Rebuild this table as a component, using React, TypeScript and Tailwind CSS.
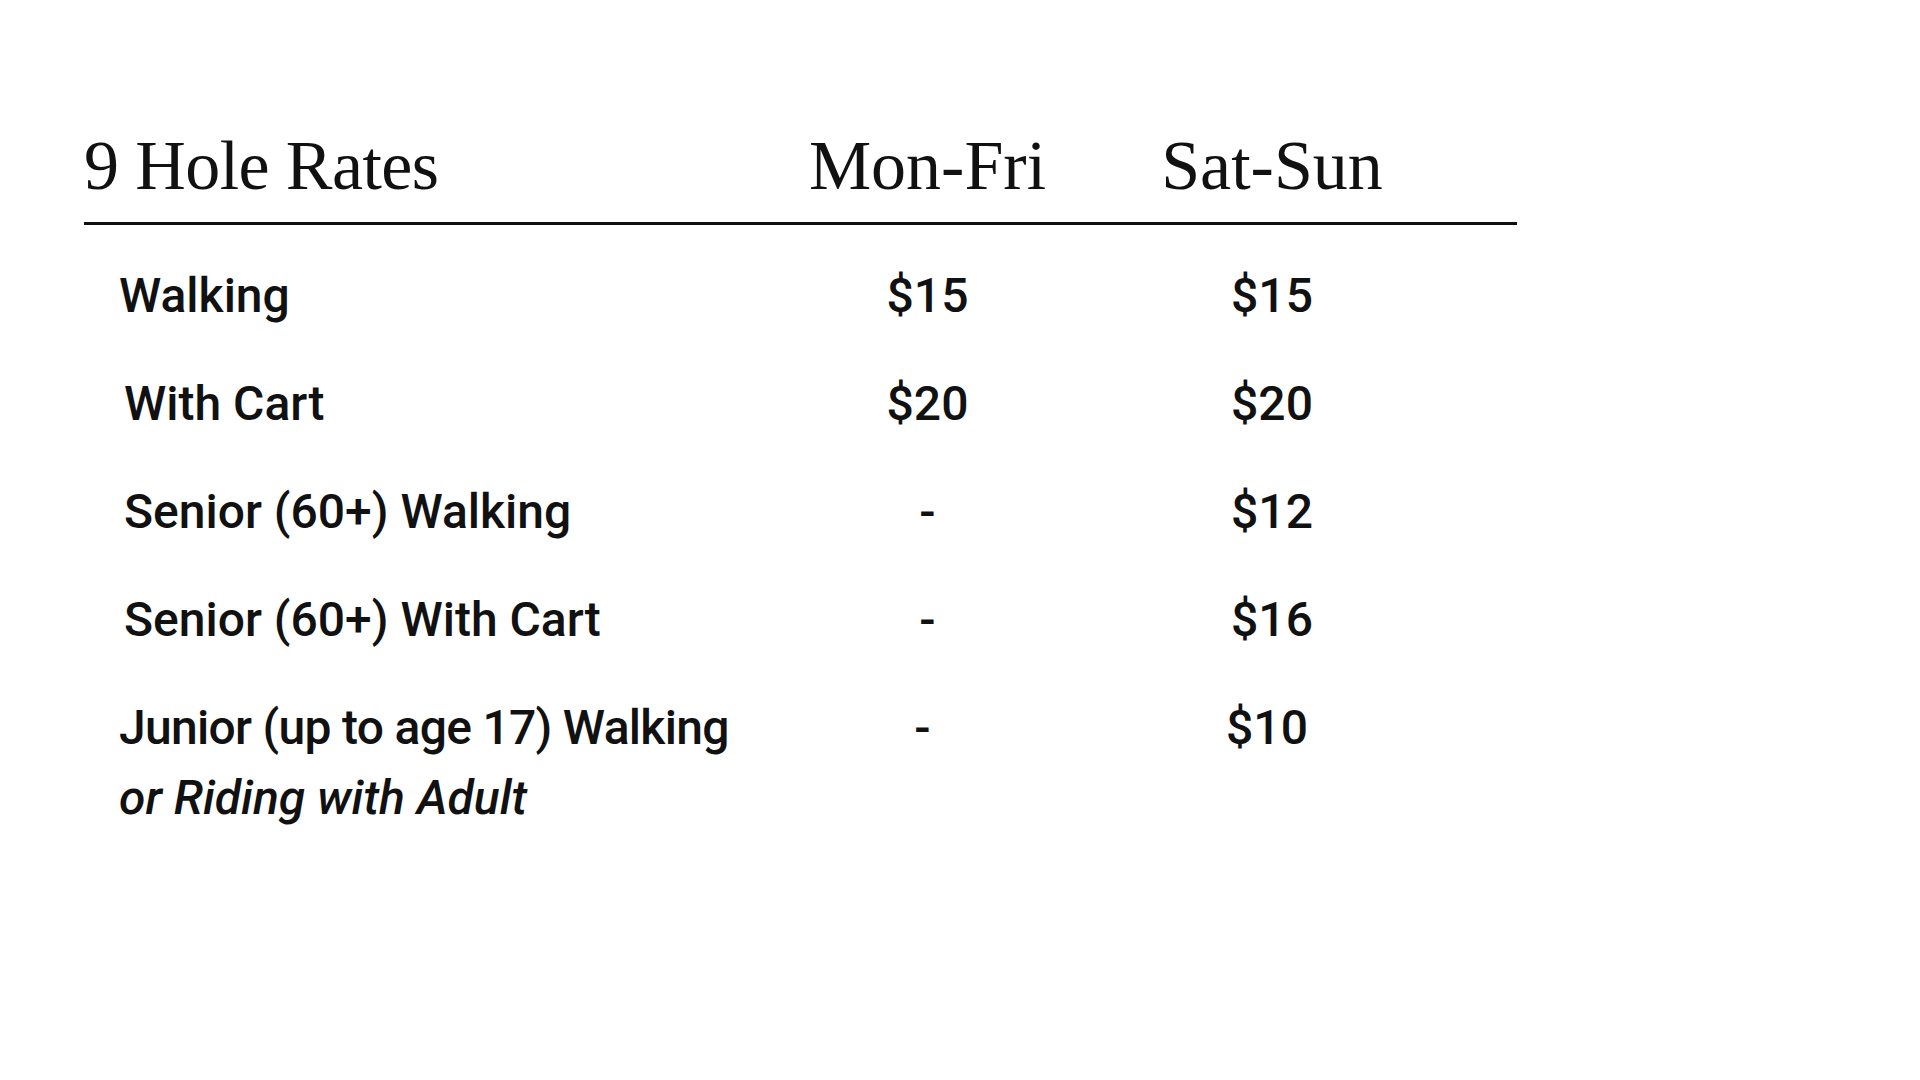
type Rate = {
  label: string;
  note?: string;
  indent: string;
  weekday: string;
  weekend: string;
  shift?: boolean;
};

const RATES: Rate[] = [
  { label: "Walking", indent: "pl-[35px]", weekday: "$15", weekend: "$15" },
  { label: "With Cart", indent: "pl-[40px]", weekday: "$20", weekend: "$20" },
  { label: "Senior (60+) Walking", indent: "pl-[40px]", weekday: "-", weekend: "$12" },
  { label: "Senior (60+) With Cart", indent: "pl-[40px]", weekday: "-", weekend: "$16" },
  {
    label: "Junior (up to age 17) Walking",
    note: "or Riding with Adult",
    indent: "pl-[35px]",
    weekday: "-",
    weekend: "$10",
    shift: true,
  },
];

export default function App() {
  return (
    <div className="w-[1920px] h-[1080px] bg-white text-[#111] overflow-hidden">
      <div className="pl-[84px] pt-[131px] w-[1517px]">
        {/* Header */}
        <div className="grid grid-cols-[723px_241px_448px] font-['Liberation_Serif','Times_New_Roman',serif] text-[70px] leading-[70px] pb-[21px]">
          <div className="tracking-[-0.6px]">9 Hole Rates</div>
          <div className="text-center">Mon-Fri</div>
          <div className="text-center">Sat-Sun</div>
        </div>
        <div className="h-[3px] bg-[#111]" />

        {/* Rows */}
        <div className="pt-[17px] font-['Roboto','Liberation_Sans',sans-serif] font-medium text-[48px] leading-[68px]">
          {RATES.map((r) => (
            <div key={r.label} className="grid grid-cols-[723px_241px_448px] py-[20px]">
              <div className={r.indent}>
                <div className={r.shift ? "tracking-[-0.7px]" : ""}>{r.label}</div>
                {r.note && <div className="italic pt-[2px]">{r.note}</div>}
              </div>
              <div className={r.shift ? "text-center pr-[10px]" : "text-center"}>{r.weekday}</div>
              <div className={r.shift ? "text-center pr-[10px]" : "text-center"}>{r.weekend}</div>
            </div>
          ))}
        </div>
      </div>
    </div>
  );
}
